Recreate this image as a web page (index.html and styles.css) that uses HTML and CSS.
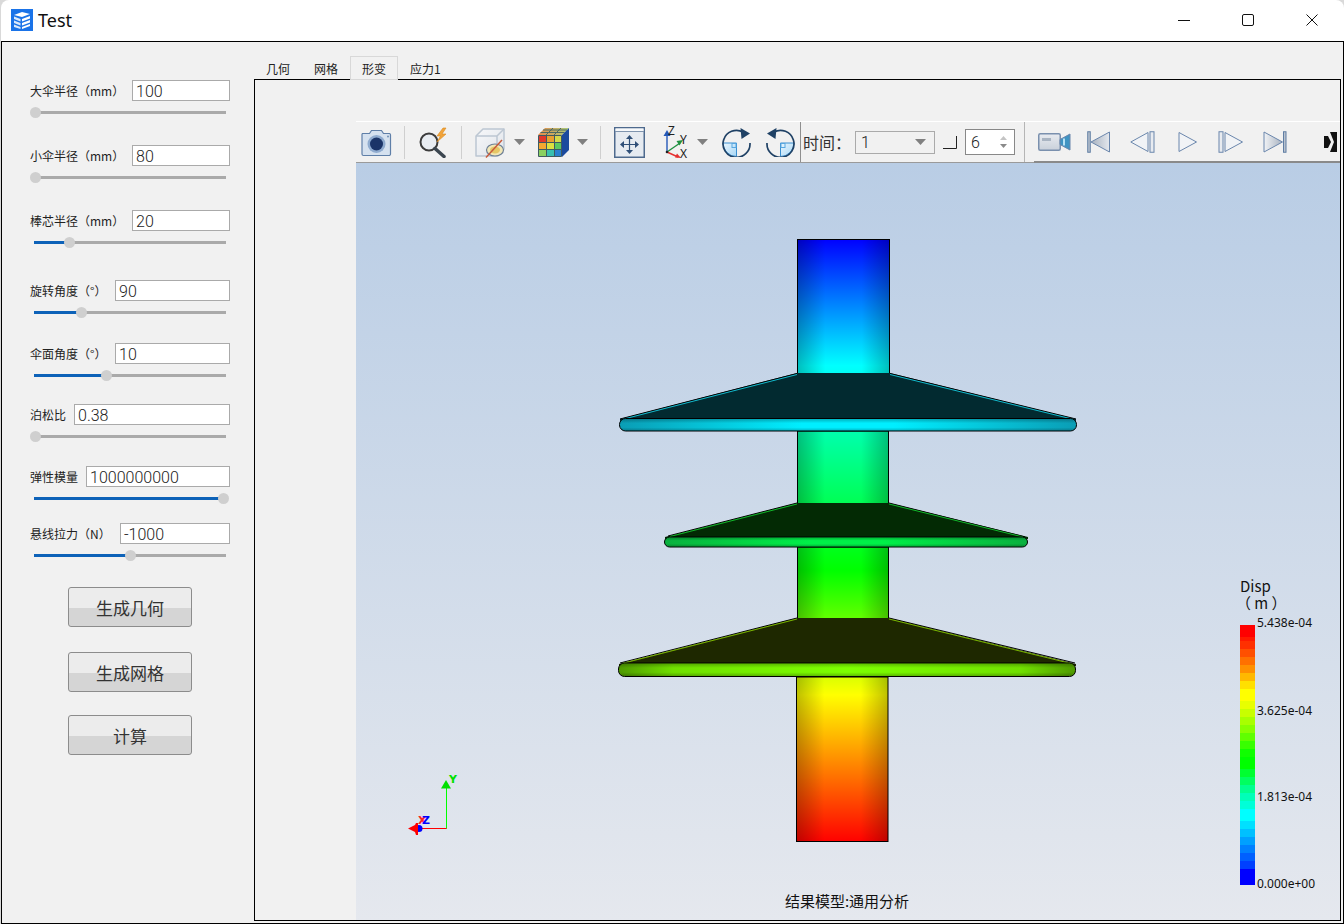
FILE: index.html
```html
<!DOCTYPE html>
<html lang="zh">
<head>
<meta charset="utf-8">
<title>Test</title>
<link rel="stylesheet" href="styles.css">
</head>
<body>
<div class="window">
  <header class="titlebar">
    <svg class="app-icon" width="22" height="22" viewBox="0 0 22 22">
      <rect width="22" height="22" fill="#1a73e8"/>
      <path d="M3 6 11 3l8 2-8 3z" fill="#fff"/>
      <path d="M3 7.500 9.500 10v2.500L3 10zM3 11.500l6.500 2.500v2.500L3 14zM3 15.500l6.500 2.500V20L3 18z" fill="#dbe9fb"/>
      <path d="M11 10l8-3v2.500l-8 3zM11 14l8-3v2.500l-8 3zM11 18l8-3v2l-8 3z" fill="#fff"/>
    </svg>
    <span class="app-title">Test</span>
    <div class="win-controls">
      <svg width="12" height="12" viewBox="0 0 12 12"><path d="M0 6.500h12" stroke="#111" fill="none"/></svg>
      <svg width="12" height="12" viewBox="0 0 12 12"><rect x=".5" y=".5" width="11" height="11" rx="1.500" stroke="#111" fill="none"/></svg>
      <svg width="12" height="12" viewBox="0 0 12 12"><path d="M.5.500l11 11M11.500.500l-11 11" stroke="#111" fill="none"/></svg>
    </div>
  </header>

  <div class="client">
    <aside class="sidebar">
      <div class="group g65">
        <div class="field"><label class="lbl">大伞半径（mm）</label><div class="input i98">100</div></div>
        <div class="track"><div class="fill" style="width:1px"></div></div>
      </div>
      <div class="group g65">
        <div class="field"><label class="lbl">小伞半径（mm）</label><div class="input i98">80</div></div>
        <div class="track"><div class="fill" style="width:1px"></div></div>
      </div>
      <div class="group g70">
        <div class="field"><label class="lbl">棒芯半径（mm）</label><div class="input i98">20</div></div>
        <div class="track"><div class="fill on" style="width:35px"></div></div>
      </div>
      <div class="group g63">
        <div class="field"><label class="lbl">旋转角度（°）</label><div class="input i115">90</div></div>
        <div class="track"><div class="fill on" style="width:47px"></div></div>
      </div>
      <div class="group g61">
        <div class="field"><label class="lbl">伞面角度（°）</label><div class="input i115">10</div></div>
        <div class="track"><div class="fill on" style="width:72px"></div></div>
      </div>
      <div class="group g62">
        <div class="field"><label class="lbl">泊松比</label><div class="input i156">0.38</div></div>
        <div class="track"><div class="fill" style="width:1px"></div></div>
      </div>
      <div class="group g57">
        <div class="field"><label class="lbl">弹性模量</label><div class="input i144">1000000000</div></div>
        <div class="track"><div class="fill on" style="width:189px"></div></div>
      </div>
      <div class="group g64">
        <div class="field"><label class="lbl">悬线拉力（N）</label><div class="input i110">-1000</div></div>
        <div class="track"><div class="fill on" style="width:96px"></div></div>
      </div>
      <button class="btn">生成几何</button>
      <button class="btn b2">生成网格</button>
      <button class="btn b3">计算</button>
    </aside>

    <main class="main">
      <nav class="tabs">
        <div class="tab">几何</div>
        <div class="tab">网格</div>
        <div class="tab active">形变</div>
        <div class="tab">应力1</div>
      </nav>
      <section class="frame">
        <div class="toolbar">
          <!-- camera -->
          <svg class="ti first" width="31" height="31" viewBox="0 0 31 31">
            <path d="M1.500 6.500h7l2-3h10l2 3h6a1.500 1.500 0 0 1 1 1.500v19a1.500 1.500 0 0 1-1.500 1.500H2.500A1.500 1.500 0 0 1 1 27V8a1.500 1.500 0 0 1 .5-1.500z" fill="#d5e1ef" stroke="#5f7fa8" stroke-width="1.200"/>
            <circle cx="15.500" cy="17" r="9" fill="#8fabcf"/>
            <circle cx="15.500" cy="17" r="6.500" fill="#1b3468"/>
            <circle cx="27" cy="9.500" r="1" fill="#6f8fb5"/>
          </svg>
          <span class="sep"></span>
          <!-- magnifier + bolt -->
          <svg class="ti" width="31" height="31" viewBox="0 0 31 31">
            <circle cx="11" cy="15" r="8.500" fill="#e9edf2" stroke="#3c3c3c" stroke-width="2"/>
            <path d="M17 21.500l9 8" stroke="#3c4650" stroke-width="3.500" stroke-linecap="round"/>
            <path d="M25 1l-6 8h3.500l-3.500 6 9-8h-4l4-6z" fill="#f2a43a" stroke="#d98a20" stroke-width=".6"/>
          </svg>
          <span class="sep"></span>
          <!-- clip cube -->
          <svg class="ti" width="31" height="31" viewBox="0 0 31 31">
            <defs><linearGradient id="cubeg" x1="0" x2="1" y1="0" y2="1"><stop offset="0" stop-color="#f7f8fa"/><stop offset="1" stop-color="#dfe3e9"/></linearGradient></defs>
            <path d="M1 9l7-7h21v20l-7 7H1z" fill="url(#cubeg)" stroke="#bcc6d2" stroke-width="1.500" stroke-linejoin="round"/>
            <path d="M1 9h21v20M22 9l7-7" fill="none" stroke="#bcc6d2" stroke-width="1.500"/>
            <ellipse cx="20" cy="23" rx="8.500" ry="6" fill="#f2e7b6" stroke="#6d7f95" stroke-width="1.200"/>
            <ellipse cx="20" cy="23" rx="5" ry="3.400" fill="#e6c765"/>
            <path d="M11 30.500 27 13" stroke="#c85a3a" stroke-width="1.500"/>
          </svg>
          <svg class="caret c8" width="11" height="6" viewBox="0 0 11 6"><path d="M0 0h11L5.500 6z" fill="#808080"/></svg>
          <!-- colored cube -->
          <svg class="ti m13" width="31" height="31" viewBox="0 0 31 31">
            <defs><linearGradient id="topg" x1="0" x2="1" y1="0" y2="0"><stop offset="0" stop-color="#e88a4a"/><stop offset="1" stop-color="#a8cc7a"/></linearGradient></defs>
            <path d="M0 8l7-7h24l-7 7z" fill="url(#topg)"/>
            <path d="M8 8l7-7M16 8l7-7M2.500 5.500h24M5 3h24" stroke="#4d6a62" fill="none"/>
            <path d="M24 8l7-7v22l-7 7z" fill="#1b4a9e"/>
            <rect x=".5" y="8.500" width="8" height="7" fill="#e0382c"/>
            <rect x="8.500" y="8.500" width="8" height="7" fill="#e8a030"/>
            <rect x="16.500" y="8.500" width="7" height="7" fill="#d4d84a"/>
            <rect x=".5" y="15.500" width="8" height="7" fill="#f4a830"/>
            <rect x="8.500" y="15.500" width="8" height="7" fill="#dce040"/>
            <rect x="16.500" y="15.500" width="7" height="7" fill="#5cc860"/>
            <rect x=".5" y="22.500" width="8" height="7" fill="#8ad060"/>
            <rect x="8.500" y="22.500" width="8" height="7" fill="#38c0b0"/>
            <rect x="16.500" y="22.500" width="7" height="7" fill="#2a80d0"/>
            <path d="M.5 8.500h23v21H.5zM8.500 8.500v21M16.500 8.500v21M.5 15.500h23M.5 22.500h23" fill="none" stroke="#3f5a62"/>
          </svg>
          <svg class="caret c8" width="11" height="6" viewBox="0 0 11 6"><path d="M0 0h11L5.500 6z" fill="#808080"/></svg>
          <span class="sep"></span>
          <!-- fit -->
          <svg class="ti" width="31" height="31" viewBox="0 0 31 31">
            <rect x=".75" y=".75" width="29.500" height="29.500" fill="#e6ebf1" stroke="#4e6a8e" stroke-width="1.500"/>
            <rect x="1.500" y="1.500" width="28" height="3" fill="#f7f9fb"/>
            <path d="M1 4.500h29" stroke="#7f94ae"/>
            <path d="M15.500 12v11M10 17.500h11" stroke="#2f4f78" stroke-width="1.200"/>
            <path d="M15.500 8l3.500 4h-7zM15.500 27l3.500-4h-7zM6 17.500l4-3.500v7zM25 17.500l-4-3.500v7z" fill="#2f4f78"/>
          </svg>
          <!-- axes -->
          <svg class="ti axes m16" width="31" height="31" viewBox="0 0 31 31">
            <path d="M6 25V7" stroke="#2458b8" stroke-width="1.400"/><path d="M6 3l3.500 6h-7z" fill="#2458b8"/>
            <path d="M6 25l13-9" stroke="#1f9140" stroke-width="1.400"/><path d="M22 13l-6.500 1 3 4.500z" fill="#1f9140"/>
            <path d="M6 25l11 5" stroke="#e53030" stroke-width="1.400"/><path d="M20 31l-6-.5 2-4z" fill="#e53030"/>
            <circle cx="6" cy="25" r="1.300" fill="#222"/>
            <text class="axt" x="7" y="8">Z</text><text class="axt" x="19" y="17">Y</text><text class="axt" x="19" y="31">X</text>
          </svg>
          <svg class="caret c5" width="11" height="6" viewBox="0 0 11 6"><path d="M0 0h11L5.500 6z" fill="#808080"/></svg>
          <!-- rotate cw -->
          <svg class="ti m14" width="29" height="29" viewBox="0 0 29 29">
            <defs><linearGradient id="quad" x1="0" x2="1" y1="0" y2="1"><stop offset="0" stop-color="#eaf6fe"/><stop offset="1" stop-color="#a6d6f5"/></linearGradient></defs>
            <path d="M1 15H14.500V28.500A13.500 13.500 0 0 1 1 15z" fill="url(#quad)" stroke="#3a8fd0"/>
            <rect x="10" y="15.500" width="4" height="4" fill="none" stroke="#5aa8e0"/>
            <path d="M21 4A13.500 13.500 0 1 0 28 15" fill="none" stroke="#1f4165" stroke-width="1.700"/>
            <path d="M18.500 0l9.500 5.500-8.500 5.500z" fill="#1f4165"/>
          </svg>
          <!-- rotate ccw -->
          <svg class="ti m15" width="29" height="29" viewBox="0 0 29 29">
            <path d="M28 15H14.500V28.500A13.500 13.500 0 0 0 28 15z" fill="url(#quad)" stroke="#3a8fd0"/>
            <rect x="15" y="15.500" width="4" height="4" fill="none" stroke="#5aa8e0"/>
            <path d="M8 4A13.500 13.500 0 1 1 1 15" fill="none" stroke="#1f4165" stroke-width="1.700"/>
            <path d="M10.500 0 1 5.500 9.500 11z" fill="#1f4165"/>
          </svg>
          <span class="dsep s5"></span>
          <span class="time-label">时间：</span>
          <div class="combo"><span>1</span><svg width="11" height="6" viewBox="0 0 11 6"><path d="M0 0h11L5.500 6z" fill="#808080"/></svg></div>
          <svg class="corner" width="14" height="13" viewBox="0 0 14 13"><path d="M0 12.500h13.500V0" fill="none" stroke="#222"/></svg>
          <div class="spin"><span>6</span>
            <svg width="7" height="14" viewBox="0 0 7 14"><path d="M3.500 1 7 5H0z" fill="#c4c4c4"/><path d="M3.500 13 7 9H0z" fill="#8a8a8a"/></svg>
          </div>
          <span class="dsep s9"></span>
          <div class="player">
            <svg width="33" height="18" viewBox="0 0 33 18">
              <defs><linearGradient id="camg" x1="0" x2="0" y1="0" y2="1"><stop offset="0" stop-color="#e8ebf0"/><stop offset="1" stop-color="#c9d0da"/></linearGradient></defs>
              <rect x=".75" y=".75" width="21.500" height="16.500" rx="1.500" fill="url(#camg)" stroke="#7a90ae" stroke-width="1.500"/>
              <rect x="4" y="5" width="9" height="3" fill="#a9b4c2"/>
              <path d="M22 6.500 32 1v16L22 11.500z" fill="#3f93c2" stroke="#6a86ac"/>
              <path d="M26 5.500v7" stroke="#b5e0f5" stroke-width="2"/>
            </svg>
            <svg class="p16" width="23" height="22" viewBox="0 0 23 22"><defs><linearGradient id="pg" x1="0" x2="1" y1="0" y2="0"><stop offset="0" stop-color="#a7b1bf"/><stop offset="1" stop-color="#e4e8ee"/></linearGradient><linearGradient id="pr" x1="0" x2="1" y1="0" y2="0"><stop offset="0" stop-color="#f1f3f6"/><stop offset="1" stop-color="#a7b1bf"/></linearGradient></defs><rect x=".75" y=".75" width="2.500" height="20.500" fill="#b9c2ce" stroke="#5f7da3"/><path d="M22.500 1v20L4 11z" fill="url(#pg)" stroke="#6a86ac"/></svg>
            <svg class="p20" width="25" height="22" viewBox="0 0 25 22"><path d="M18 1.500v19L.8 11z" fill="#f1f3f6" stroke="#6a86ac"/><rect x="20" y=".75" width="4" height="20.500" fill="#e8ebf0" stroke="#6a86ac"/></svg>
            <svg class="p23" width="19" height="22" viewBox="0 0 19 22"><path d="M1 1.500v19L18.500 11z" fill="#f1f3f6" stroke="#6a86ac"/></svg>
            <svg class="p21" width="25" height="22" viewBox="0 0 25 22"><rect x="1" y=".75" width="4" height="20.500" fill="#e8ebf0" stroke="#6a86ac"/><path d="M7 1.500v19L24.500 11z" fill="#f1f3f6" stroke="#6a86ac"/></svg>
            <svg class="p20" width="24" height="22" viewBox="0 0 24 22"><path d="M1 1v20l18.500-10z" fill="url(#pr)" stroke="#6a86ac"/><rect x="20.500" y=".75" width="2.500" height="20.500" fill="#b9c2ce" stroke="#5f7da3"/></svg>
            <svg class="p37" width="13" height="20" viewBox="0 0 13 20"><path d="M0 4h4l3 6-3 6H0zM6 0h7v20H6l4-10z" fill="#111"/></svg>
          </div>
        </div>

        <div class="viewport">
          <svg class="scene" viewBox="356 163 983 757" width="983" height="757">
            <defs>
              <linearGradient id="rainbow" gradientUnits="userSpaceOnUse" x1="0" y1="239" x2="0" y2="842">
                <stop offset="0" stop-color="#0000ff"/>
                <stop offset=".21" stop-color="#00ffff"/>
                <stop offset=".55" stop-color="#00ff00"/>
                <stop offset=".756" stop-color="#ffff00"/>
                <stop offset="1" stop-color="#ff0000"/>
              </linearGradient>
              <linearGradient id="edge" x1="0" x2="1" y1="0" y2="0">
                <stop offset="0" stop-color="#000" stop-opacity=".25"/>
                <stop offset=".3" stop-color="#000" stop-opacity="0"/>
                <stop offset=".7" stop-color="#000" stop-opacity="0"/>
                <stop offset="1" stop-color="#000" stop-opacity=".25"/>
              </linearGradient>
              <linearGradient id="rimv" x1="0" x2="0" y1="0" y2="1">
                <stop offset="0" stop-color="#000" stop-opacity=".25"/>
                <stop offset=".35" stop-color="#000" stop-opacity="0"/>
                <stop offset=".7" stop-color="#000" stop-opacity="0"/>
                <stop offset="1" stop-color="#000" stop-opacity=".25"/>
              </linearGradient>
              <linearGradient id="rim1" x1="0" x2="1" y1="0" y2="0">
                <stop offset="0" stop-color="#0a9db5"/><stop offset=".4" stop-color="#00eeff"/><stop offset=".6" stop-color="#00eeff"/><stop offset="1" stop-color="#0a9db5"/>
              </linearGradient>
              <linearGradient id="rim2" x1="0" x2="1" y1="0" y2="0">
                <stop offset="0" stop-color="#0ab03f"/><stop offset=".4" stop-color="#00f048"/><stop offset=".6" stop-color="#00f048"/><stop offset="1" stop-color="#0ab03f"/>
              </linearGradient>
              <linearGradient id="rim3" x1="0" x2="1" y1="0" y2="0">
                <stop offset="0" stop-color="#4f9a00"/><stop offset=".12" stop-color="#70e000"/><stop offset=".5" stop-color="#7cff00"/><stop offset=".88" stop-color="#70e000"/><stop offset="1" stop-color="#4f9a00"/>
              </linearGradient>
            </defs>

            <!-- cylinders -->
            <g stroke="#000" stroke-width="1">
              <rect x="797.500" y="239.500" width="92" height="135" fill="url(#rainbow)"/>
              <rect x="797.500" y="431" width="91" height="73" fill="url(#rainbow)"/>
              <rect x="797.500" y="547" width="91" height="72" fill="url(#rainbow)"/>
              <rect x="796.500" y="677" width="91.500" height="164.500" fill="url(#rainbow)"/>
            </g>
            <g>
              <rect x="798" y="240" width="91" height="134" fill="url(#edge)"/>
              <rect x="798" y="431" width="90" height="73" fill="url(#edge)"/>
              <rect x="798" y="547" width="90" height="72" fill="url(#edge)"/>
              <rect x="797" y="677" width="91" height="164" fill="url(#edge)"/>
            </g>

            <!-- shed 1 -->
            <path d="M797 373h93l186 46v2H620v-2z" fill="#022a30"/>
            <path d="M620 419 797 373.500M890 373.500 1076 419" fill="none" stroke="#000" stroke-width="1"/>
            <path d="M622 419.500 797 374.500M890 374.500 1074 419.500" fill="none" stroke="#12b9cc"/>
            <rect x="619.500" y="418.500" width="457" height="12.500" rx="6" fill="url(#rim1)" stroke="#000"/>
            <rect x="620" y="419" width="456" height="12" rx="6" fill="url(#rimv)"/>

            <!-- shed 2 -->
            <path d="M797 503h92l139 34v2H665v-2z" fill="#032a04"/>
            <path d="M668 536 797 503M889 503 1025 537" fill="none" stroke="#000" stroke-width="1"/>
            <path d="M670 536.500 797 504M889 504 1023 537" fill="none" stroke="#12b92a"/>
            <rect x="664.500" y="537" width="363" height="10" rx="5" fill="url(#rim2)" stroke="#000"/>
            <rect x="665" y="537.500" width="362" height="9" rx="4.500" fill="url(#rimv)"/>

            <!-- shed 3 -->
            <path d="M797 618h92l187 46v2H619v-2z" fill="#1e2800"/>
            <path d="M620 663 797 618M889 618 1075 663" fill="none" stroke="#000" stroke-width="1"/>
            <path d="M622 663.500 797 619M889 619 1073 664" fill="none" stroke="#7cb800"/>
            <rect x="618.500" y="663" width="457" height="13.500" rx="6" fill="url(#rim3)" stroke="#000"/>
            <rect x="619" y="663.500" width="456" height="12.500" rx="6" fill="url(#rimv)"/>

            <!-- axes -->
            <path d="M446.500 788v40.500H420" fill="none" stroke="#00ff00" stroke-width="1"/>
            <path d="M446.500 828.500H420" fill="none" stroke="#ff0000" stroke-width="1"/>
            <path d="M446 780l5 8.500h-10z" fill="#00e000"/>
            <circle cx="419" cy="828.500" r="3.500" fill="#0000ff"/>
            <path d="M408 828.500l7-3.500 1-2h2v12h-2l-1-3z" fill="#ff0000"/>
            <text class="axis x" x="418" y="824">X</text>
            <text class="axis z" x="422" y="824">Z</text>
            <text class="axis y" x="449" y="783">Y</text>

            <!-- colour bar -->
            <g shape-rendering="crispEdges">
              <rect x="1240" y="625" width="15" height="12" fill="#ff0000"/>
              <rect x="1240" y="637" width="15" height="4" fill="#ff1a00"/>
              <rect x="1240" y="641" width="15" height="8" fill="#ff3000"/>
              <rect x="1240" y="649" width="15" height="8" fill="#ff5000"/>
              <rect x="1240" y="657" width="15" height="8" fill="#ff7000"/>
              <rect x="1240" y="665" width="15" height="8" fill="#ff9000"/>
              <rect x="1240" y="673" width="15" height="8" fill="#ffb800"/>
              <rect x="1240" y="681" width="15" height="8" fill="#ffe000"/>
              <rect x="1240" y="689" width="15" height="12" fill="#ffff00"/>
              <rect x="1240" y="701" width="15" height="8" fill="#e8ff00"/>
              <rect x="1240" y="709" width="15" height="8" fill="#c8ff00"/>
              <rect x="1240" y="717" width="15" height="8" fill="#a8ff00"/>
              <rect x="1240" y="725" width="15" height="8" fill="#88ff00"/>
              <rect x="1240" y="733" width="15" height="8" fill="#60ff00"/>
              <rect x="1240" y="741" width="15" height="8" fill="#38ff00"/>
              <rect x="1240" y="749" width="15" height="8" fill="#10ff00"/>
              <rect x="1240" y="757" width="15" height="12" fill="#00ff00"/>
              <rect x="1240" y="769" width="15" height="8" fill="#00ff30"/>
              <rect x="1240" y="777" width="15" height="8" fill="#00ff60"/>
              <rect x="1240" y="785" width="15" height="8" fill="#00ff90"/>
              <rect x="1240" y="793" width="15" height="8" fill="#00ffb8"/>
              <rect x="1240" y="801" width="15" height="8" fill="#00ffd8"/>
              <rect x="1240" y="809" width="15" height="12" fill="#00ffff"/>
              <rect x="1240" y="821" width="15" height="8" fill="#00e0ff"/>
              <rect x="1240" y="829" width="15" height="8" fill="#00c0ff"/>
              <rect x="1240" y="837" width="15" height="8" fill="#00a0ff"/>
              <rect x="1240" y="845" width="15" height="8" fill="#0080ff"/>
              <rect x="1240" y="853" width="15" height="8" fill="#0060ff"/>
              <rect x="1240" y="861" width="15" height="8" fill="#0040ff"/>
              <rect x="1240" y="869" width="15" height="16" fill="#0000ff"/>
            </g>
            <text class="cb-title" x="1240" y="592">Disp</text>
            <text class="cb-title" x="1236" y="609">（ m ）</text>
            <text class="cb-val" x="1257" y="627">5.438e-04</text>
            <text class="cb-val" x="1257" y="715">3.625e-04</text>
            <text class="cb-val" x="1257" y="801">1.813e-04</text>
            <text class="cb-val" x="1257" y="888">0.000e+00</text>
            <text class="model" x="847" y="907">结果模型:通用分析</text>
          </svg>
        </div>
      </section>
    </main>
  </div>
</div>
</body>
</html>
```

FILE: styles.css
```css
* { box-sizing: border-box; }
html, body { margin: 0; height: 100%; }
body {
  width: 1344px;
  height: 924px;
  overflow: hidden;
  background: #d9d9d9;
  font-family: "Noto Sans CJK SC", "Noto Sans", sans-serif;
  color: #1a1a1a;
}
.window {
  height: 924px;
  margin-left: 1px;
  display: flex;
  flex-direction: column;
}
.titlebar {
  height: 41px;
  flex: none;
  background: #fff;
  border-radius: 8px 8px 0 0;
  display: flex;
  align-items: center;
  padding-left: 10px;
  padding-bottom: 1px;
}
.app-title {
  margin-left: 5px;
  font: 18px "Noto Sans", sans-serif;
  color: #111;
}
.win-controls {
  margin-left: auto;
  margin-right: 26px;
  display: flex;
  gap: 52px;
  align-items: center;
}
.client {
  flex: 1;
  min-height: 0;
  display: flex;
  border: 1px solid #000;
  background: #f1f1f1;
}
.sidebar {
  width: 252px;
  flex: none;
  padding: 38px 0 0 28px;
  display: flex;
  flex-direction: column;
  align-items: flex-start;
}
.group { width: 200px; }
.g57 { height: 57px; }
.g61 { height: 61px; }
.g62 { height: 62px; }
.g63 { height: 63px; }
.g64 { height: 64px; }
.g65 { height: 65px; }
.g70 { height: 70px; }
.field {
  height: 21px;
  display: flex;
  align-items: center;
  justify-content: space-between;
}
.lbl { font-size: 12px; color: #222; white-space: nowrap; }
.input {
  height: 21px;
  background: #fff;
  border: 1px solid #aaa;
  padding-left: 3px;
  font: 300 16px/21px Roboto, "Liberation Sans", sans-serif;
  color: #222;
}
.i98 { width: 98px; }
.i110 { width: 110px; }
.i115 { width: 115px; }
.i144 { width: 144px; }
.i156 { width: 156px; }
.track {
  position: relative;
  width: 192px;
  height: 3px;
  margin: 10px 0 0 4px;
  background: #aaa;
}
.fill {
  position: absolute;
  left: 0;
  top: 0;
  height: 3px;
}
.fill.on { background: #0d62b8; }
.fill::after {
  content: "";
  position: absolute;
  right: -6px;
  top: -4px;
  width: 11px;
  height: 11px;
  border-radius: 50%;
  background: #cfcfcf;
}
.btn {
  width: 124px;
  height: 40px;
  margin-left: 38px;
  flex: none;
  border: 1px solid #8c8c8c;
  border-radius: 3px;
  background: linear-gradient(#ececec 0 52%, #d5d5d5 52% 100%);
  font: 17px "Noto Sans CJK SC", sans-serif;
  color: #333;
  padding: 0;
}
.b2 { margin-top: 25px; }
.b3 { margin-top: 23px; }

.main {
  flex: 1;
  min-width: 0;
  display: flex;
  flex-direction: column;
  padding: 14px 2px 2px 0;
}
.tabs {
  height: 23px;
  flex: none;
  display: flex;
  position: relative;
  z-index: 1;
}
.tab {
  height: 23px;
  padding: 0 12px;
  font-size: 12px;
  line-height: 26px;
  color: #222;
}
.tab.active {
  height: 24px;
  padding: 0 11px;
  border: 1px solid #d8d8d8;
  line-height: 24px;
  background: #f1f1f1;
}
.frame {
  flex: 1;
  min-height: 0;
  border: 1px solid #000;
  padding: 41px 0 0 101px;
  display: flex;
  flex-direction: column;
}
.toolbar {
  height: 42px;
  flex: none;
  display: flex;
  align-items: center;
  border-top: 1px solid #fff;
  border-bottom: 1px solid #9a9a9a;
  padding-left: 5px;
}
.toolbar > svg { flex: none; }
.axes { overflow: visible; }
.sep {
  width: 1px;
  height: 33px;
  flex: none;
  background: #cfcfcf;
  margin: 0 13px 0 12px;
}
.c8 { margin-left: 8px; }
.c5 { margin-left: 5px; }
.m13 { margin-left: 13px; }
.m14 { margin-left: 14px; }
.m15 { margin-left: 15px; }
.m16 { margin-left: 16px; }
.axt { font: 12px "Noto Sans", sans-serif; fill: #222; }
.dsep {
  width: 1px;
  align-self: stretch;
  flex: none;
  background: #8f8f8f;
}
.s5 { margin: 0 2px 0 5px; }
.s9 { margin: 0 9px; background: #b5b5b5; }
.time-label {
  width: 52px;
  flex: none;
  font-size: 16px;
  color: #333;
  white-space: nowrap;
}
.combo {
  width: 80px;
  height: 23px;
  flex: none;
  border: 1px solid #aaa;
  display: flex;
  align-items: center;
  justify-content: space-between;
  padding: 0 8px 0 5px;
  font: 300 16px Roboto, "Liberation Sans", sans-serif;
}
.corner { margin-left: 8px; }
.spin {
  width: 50px;
  height: 26px;
  flex: none;
  margin-left: 8px;
  background: #fff;
  border: 1px solid #888;
  display: flex;
  align-items: center;
  justify-content: space-between;
  padding: 0 7px 0 5px;
  font: 300 16px Roboto, "Liberation Sans", sans-serif;
}
.player {
  flex: 1;
  align-self: stretch;
  margin: -1px 0 -1px;
  display: flex;
  align-items: center;
  padding-left: 4px;
  border-top: 1px solid #fff;
  border-bottom: 2px solid #8a8a8a;
}
.player svg { flex: none; }
.p16 { margin-left: 16px; }
.p20 { margin-left: 20px; }
.p21 { margin-left: 21px; }
.p23 { margin-left: 23px; }
.p37 { margin-left: 37px; }

.viewport {
  flex: 1;
  min-height: 0;
  position: relative;
  background: linear-gradient(#b9cde5, #e5e8ee);
  overflow: hidden;
}
.scene { position: absolute; left: 0; top: 0; display: block; }
.axis { font: bold 11px "DejaVu Sans", sans-serif; }
.axis.x { fill: #ff2020; }
.axis.z { fill: #0000ff; }
.axis.y { fill: #00e000; }
.cb-title { font: 15px "Noto Sans CJK SC", "Noto Sans", sans-serif; fill: #111; }
.cb-val { font: 12px "Noto Sans", sans-serif; fill: #111; }
.model { font: 15px "Noto Sans CJK SC", sans-serif; fill: #111; text-anchor: middle; }
```
